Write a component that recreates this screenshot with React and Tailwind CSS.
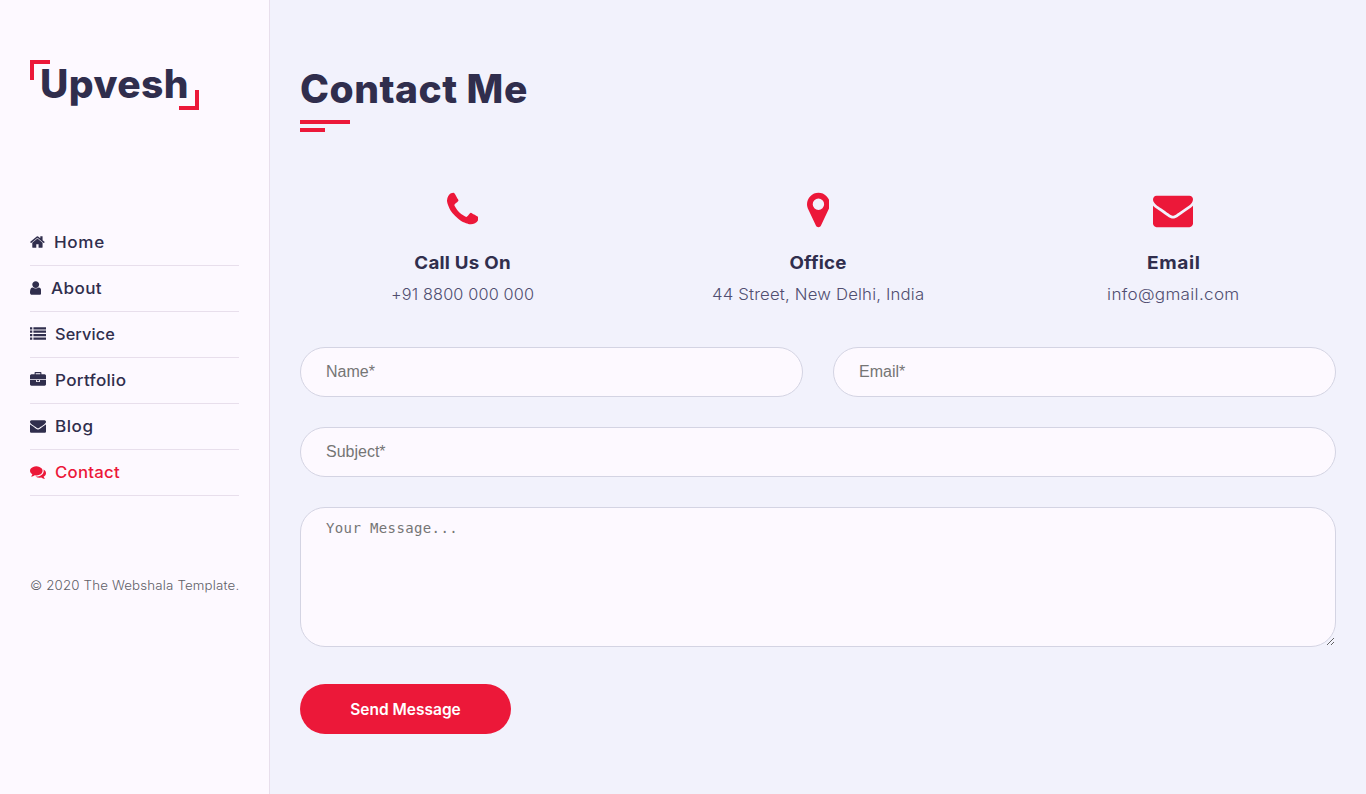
import React from 'react';

const ICONS = {
  home: {
    box: '64 0 1664 1792',
    d: 'M1472 992v480q0 26-19 45t-45 19h-384v-384h-256v384h-384q-26 0-45-19t-19-45v-480q0-1 .5-3t.5-3l575-474 575 474q1 2 1 6zm223-69l-62 74q-8 9-21 11h-3q-13 0-21-7l-692-577-692 577q-12 8-24 7-13-2-21-11l-62-74q-8-10-7-23.5t11-21.5l719-599q32-26 76-26t76 26l244 204v-195q0-14 9-23t23-9h192q14 0 23 9t9 23v408l219 182q10 8 11 21.5t-7 23.5z',
  },
  user: {
    box: '256 0 1280 1792',
    d: 'M1536 1399q0 109-62.5 187t-150.5 78h-854q-88 0-150.5-78t-62.5-187q0-85 8.5-160.5t31.5-152 58.5-131 94-89 134.5-34.5q131 128 313 128t313-128q76 0 134.5 34.5t94 89 58.5 131 31.5 152 8.5 160.5zm-256-887q0 159-112.5 271.5t-271.5 112.5-271.5-112.5-112.5-271.5 112.5-271.5 271.5-112.5 271.5 112.5 112.5 271.5z',
  },
  list: {
    box: '0 0 1792 1792',
    d: 'M0 1280h256v256h-256zM0 896h256v256h-256zM0 512h256v256h-256zM384 1280h1408v256h-1408zM0 128h256v256h-256zM384 896h1408v256h-1408zM384 512h1408v256h-1408zM384 128h1408v256h-1408z',
  },
  briefcase: {
    box: '0 0 1792 1792',
    d: 'M640 256h512v-128h-512v128zm1152 640v480q0 66-47 113t-113 47h-1472q-66 0-113-47t-47-113v-480h672v160q0 26 19 45t45 19h320q26 0 45-19t19-45v-160h672zm-768 0v128h-256v-128h256zm768-480v384h-1792v-384q0-66 47-113t113-47h352v-160q0-40 28-68t68-28h576q40 0 68 28t28 68v160h352q66 0 113 47t47 113z',
  },
  envelope: {
    box: '0 0 1792 1792',
    d: 'M1792 710v794q0 66-47 113t-113 47h-1472q-66 0-113-47t-47-113v-794q44 49 101 87 362 246 497 345 57 42 92.5 65.5t94.5 48 110 24.5h2q51 0 110-24.5t94.5-48 92.5-65.5q170-123 498-345 57-39 100-87zm0-294q0 79-49 151t-122 123q-376 261-468 325-10 7-42.5 31t-54 38.5-52 32.5-57.5 27-50 9h-2q-23 0-50-9t-57.5-27-52-32.5-54-38.5-42.5-31q-91-64-262-182.5t-205-142.5q-62-42-117-115.5t-55-136.5q0-78 41.5-130t118.5-52h1472q65 0 112.5 47t47.5 113z',
  },
  comments: {
    box: '0 0 1792 1792',
    d: 'M1408 768q0 139-94 257t-256.5 186.5-353.5 68.5q-86 0-176-16-124 88-278 128-36 9-86 16h-3q-11 0-20.5-8t-11.5-21q-1-3-1-6.5t.5-6.5 2-6l2.5-5 3.5-5.5 4-5 4.5-5 4-4.5q5-6 23-25t26-29.5 22.5-29 25-38.5 20.5-44q-124-72-195-177t-71-224q0-139 94-257t256.5-186.5 353.5-68.5 353.5 68.5 256.5 186.5 94 257zm384 256q0 120-71 224.5t-195 176.5q10 24 20.5 44t25 38.5 22.5 29 26 29.5 23 25q1 1 4 4.5t4.5 5 4 5 3.5 5.5l2.5 5 2 6 .5 6.5-1 6.5q-3 14-13 22t-22 7q-50-7-86-16-154-40-278-128-90 16-176 16-271 0-472-132 58 4 88 4 161 0 309-45t264-129q125-92 192-212t67-254q0-77-23-152 129 71 204 178t75 230z',
  },
  phone: {
    box: '192 0 1408 1792',
    d: 'M1600 1240q0 27-10 70.5t-21 68.5q-21 50-122 106-94 51-186 51-27 0-53-3.5t-57.5-12.5-47-14.5-55.5-20.5-49-18q-98-35-175-83-127-79-264-216t-216-264q-48-77-83-175-3-9-18-49t-20.5-55.5-14.5-47-12.5-57.5-3.5-53q0-92 51-186 56-101 106-122 25-11 68.5-21t70.5-10q14 0 21 3 18 6 53 76 11 19 30 54t35 63.5 31 53.5q3 4 17.5 25t21.5 35.5 7 28.5q0 20-28.5 50t-62 55-62 53-28.5 46q0 9 5 22.5t8.5 20.5 14 24 11.5 19q76 137 174 235t235 174q2 1 19 11.5t24 14 20.5 8.5 22.5 5q18 0 46-28.5t53-62 55-62 50-28.5q14 0 28.5 7t35.5 21.5 25 17.5q25 15 53.5 31t63.5 35 54 30q70 35 76 53 3 7 3 21z',
  },
  marker: {
    box: '384 0 1024 1792',
    d: 'M1152 640q0-106-75-181t-181-75-181 75-75 181 75 181 181 75 181-75 75-181zm256 0q0 109-33 179l-364 774q-16 33-47.5 52t-67.5 19-67.5-19-46.5-52l-365-774q-33-70-33-179 0-212 150-362t362-150 362 150 150 362z',
  },
};

function Icon({ name, className }) {
  return (
    <svg viewBox={ICONS[name].box} className={className} fill="currentColor" aria-hidden="true">
      <path d={ICONS[name].d} />
    </svg>
  );
}

const NAV = [
  { label: 'Home', icon: 'home', size: 'w-[14.86px]', text: 'ml-[9.4px] scale-x-[1.08] tracking-[0.62px]' },
  { label: 'About', icon: 'user', size: 'w-[11.43px]', text: 'ml-[9.5px] scale-x-[1.08] tracking-[0.37px]' },
  { label: 'Service', icon: 'list', size: 'w-4', text: 'ml-[9.3px] scale-x-[1.03] tracking-[0.14px]' },
  { label: 'Portfolio', icon: 'briefcase', size: 'w-4', text: 'ml-[9.4px] scale-x-[1.08] tracking-[0.28px]' },
  { label: 'Blog', icon: 'envelope', size: 'w-4', text: 'ml-[9.4px] scale-x-[1.08] tracking-[0.5px]' },
  { label: 'Contact', icon: 'comments', size: 'w-4', text: 'ml-[9.2px] scale-x-[1.06] tracking-[0.23px]', active: true },
];

const INFO = [
  { title: 'Call Us On', text: '+91 8800 000 000', icon: 'phone', size: 'w-[31.43px]', t1: 'scale-x-[1.06] tracking-[0.23px]', t2: 'scale-x-[1.03] tracking-[0.15px]' },
  { title: 'Office', text: '44 Street, New Delhi, India', icon: 'marker', size: 'w-[22.86px]', t1: 'scale-x-[1.06] tracking-[0.18px]', t2: 'scale-x-[1.06] tracking-[0.16px]' },
  { title: 'Email', text: 'info@gmail.com', icon: 'envelope', size: 'w-10', t1: 'scale-x-[1.08] tracking-[0.55px]', t2: 'scale-x-[1.08] tracking-[0.29px]' },
];

const FIELD =
  "block w-full rounded-[25px] border border-[#d4d4e3] bg-[#fdf9ff] px-[25px] text-[#302e4d] outline-none placeholder:text-[#757575] placeholder:opacity-100";

function Sidebar() {
  return (
    <aside className="flex w-[270px] shrink-0 flex-col border-r border-[#e8dfec] bg-[#fdf9ff] px-[30px] pt-[60px]">
      <div className="relative h-[50px] w-[169px] pl-[10px]">
        <span className="absolute left-0 top-0 size-5 border-l-4 border-t-4 border-[#ec1839]" />
        <span className="block whitespace-nowrap text-[39px] font-extrabold leading-[48px] tracking-[0.42px]">Upvesh</span>
        <span className="absolute bottom-0 right-0 size-5 border-b-4 border-r-4 border-[#ec1839]" />
      </div>
      <nav className="mt-[110px]">
        {NAV.map((n) => (
          <a
            key={n.label}
            href="#"
            className={`flex h-[46px] w-[209px] items-center border-b border-[#e8dfec] text-[15.8px] font-medium ${n.active ? 'text-[#ec1839]' : 'text-[#302e4d]'}`}
          >
            <Icon name={n.icon} className={`mb-px h-4 shrink-0 ${n.size}`} />
            <span className={`origin-left ${n.text}`}>{n.label}</span>
          </a>
        ))}
      </nav>
      <p className="mt-[80px] origin-left scale-x-[1.04] whitespace-nowrap text-[12.8px] font-light leading-5 tracking-[0.15px] text-[#5f5f68]">
        © 2020 The Webshala Template.
      </p>
    </aside>
  );
}

export default function App() {
  return (
    <div className="flex h-[794px] w-full overflow-hidden bg-[#f2f2fc] font-[Inter,sans-serif] text-[#302e4d]">
      <Sidebar />
      <main className="min-w-0 flex-1 px-[30px] pt-[60px]">
        <h1 className="h-[60px] text-[39px] font-extrabold leading-[58px] tracking-[0.5px]">Contact Me</h1>
        <div className="h-1 w-[50px] bg-[#ec1839]" />
        <div className="mt-1 h-1 w-[25px] bg-[#ec1839]" />

        <section className="mt-[58px] grid grid-cols-3 gap-[30px] text-center">
          {INFO.map((i) => (
            <div key={i.title} className="flex flex-col items-center">
              <Icon name={i.icon} className={`h-10 text-[#ec1839] ${i.size}`} />
              <h4 className={`mt-[20px] text-[17.7px] font-bold leading-[25px] ${i.t1}`}>{i.title}</h4>
              <p className={`mt-[7px] whitespace-nowrap text-[15.8px] font-light leading-[25px] text-[#504e70] ${i.t2}`}>{i.text}</p>
            </div>
          ))}
        </section>

        <form className="mt-[40px]" onSubmit={(e) => e.preventDefault()}>
          <div className="grid grid-cols-2 gap-[30px]">
            <input placeholder="Name*" className={`${FIELD} h-[50px] font-['Liberation_Sans',sans-serif] text-base`} />
            <input placeholder="Email*" className={`${FIELD} h-[50px] font-['Liberation_Sans',sans-serif] text-base`} />
          </div>
          <input placeholder="Subject*" className={`${FIELD} mt-[30px] h-[50px] font-['Liberation_Sans',sans-serif] text-base`} />
          <textarea
            placeholder="Your Message..."
            className={`${FIELD} mt-[30px] h-[140px] resize py-[10px] font-['DejaVu_Sans_Mono',monospace] text-[14px] leading-5 tracking-[0.37px]`}
          />
          <button className="mt-[37px] h-[50px] w-[211px] rounded-full bg-[#ec1839] pt-[2px] text-[15.5px] font-semibold text-white">
            Send Message
          </button>
        </form>
      </main>
    </div>
  );
}
